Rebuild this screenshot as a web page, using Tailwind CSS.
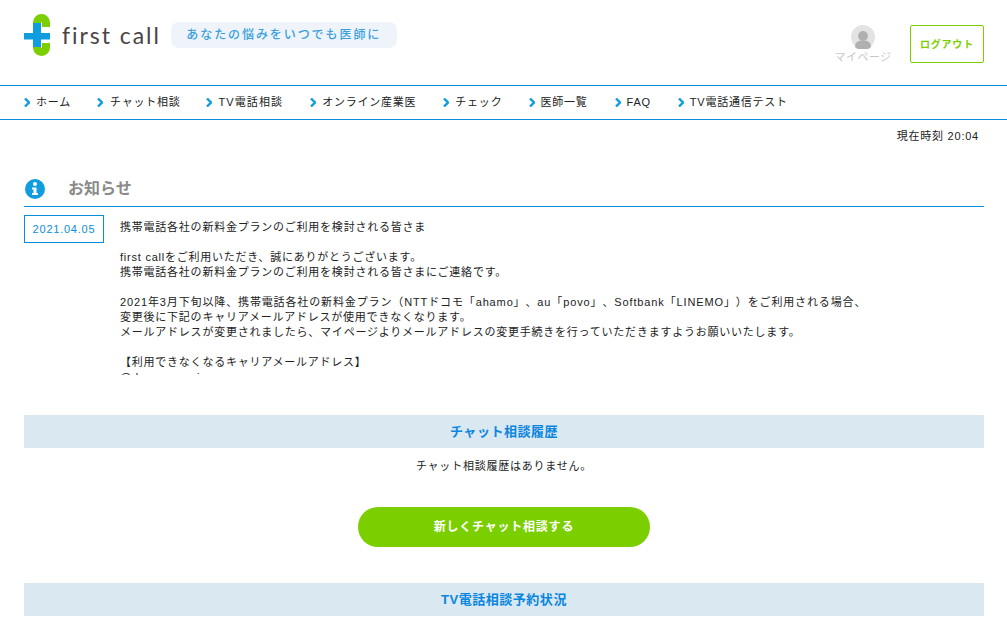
<!DOCTYPE html>
<html lang="ja">
<head>
    <meta charset="UTF-8">
    <title>first call</title>
    <script src="https://cdn.jsdelivr.net/npm/@tailwindcss/browser@4"></script>
</head>
<body class="h-[624px] overflow-hidden bg-white text-[11px] leading-[15px] tracking-[0.07em] text-[#222] [text-spacing-trim:space-all] font-['Liberation_Sans','Noto_Sans_CJK_JP',sans-serif]">
    <!-- Header -->
    <header class="h-[86px] border-b border-[#0a8ed9] pl-[24px] pr-[23px] flex">
        <svg class="mt-[14px] w-[26px] h-[42px]" viewBox="0 0 26 42">
            <path d="M22 13V8.500A4.500 4.500 0 0 0 13 8.500V33.500A4.500 4.500 0 0 0 22 33.500V29" fill="none" stroke="#7bcf00" stroke-width="8"/>
            <path d="M9 9h8v24H9zM0 19h26v6.500H0z" fill="#0f9de0"/>
        </svg>
        <span class="ml-[12px] mt-[20px] text-[23px] leading-[30px] tracking-[0.085em] font-normal text-[#4a4444] font-['Lato',sans-serif]">first call</span>
        <div class="ml-[10px] mt-[22px] w-[226px] h-[26px] rounded-[8px] bg-[#eef4fa] flex items-center justify-center text-[12px] font-medium tracking-[0.16em] text-[#3a9fdc]">あなたの悩みをいつでも医師に</div>
        <div class="ml-auto mt-[25px] w-[54px] flex flex-col items-center text-[#c8c8c8] tracking-[0.04em]">
            <svg class="w-[24px] h-[24px]" viewBox="0 0 24 24">
                <circle cx="12" cy="12" r="12" fill="#e3e3e3"/>
                <circle cx="12" cy="11" r="5" fill="#b0b0b0"/>
                <path d="M4 22c0-5 3-6.500 8-6.500s8 1.500 8 6.500a12 12 0 0 1-16 0z" fill="#b0b0b0"/>
            </svg>
            <span class="whitespace-nowrap mt-[1px]">マイページ</span>
        </div>
        <div class="ml-[20px] mt-[25px] w-[74px] h-[38px] border border-[#7bcf00] rounded-[2px] flex items-center justify-center text-[10px] font-bold text-[#7bcf00]">ログアウト</div>
    </header>

    <!-- Nav -->
    <nav class="h-[34px] border-b border-[#0a8ed9] px-[24px] flex items-center gap-[25px] whitespace-nowrap">
        <a class="flex items-center gap-[6px] mr-[1px]"><svg class="w-[6px] h-[9px]" viewBox="0 0 6 9"><path d="M1 .5l4 4-4 4" fill="none" stroke="#0f9de0" stroke-width="2.400"/></svg>ホーム</a>
        <a class="flex items-center gap-[7px]"><svg class="w-[6px] h-[9px]" viewBox="0 0 6 9"><path d="M1 .5l4 4-4 4" fill="none" stroke="#0f9de0" stroke-width="2.400"/></svg>チャット相談</a>
        <a class="flex items-center gap-[7px] tracking-[0.1em] mr-[2px]"><svg class="w-[6px] h-[9px]" viewBox="0 0 6 9"><path d="M1 .5l4 4-4 4" fill="none" stroke="#0f9de0" stroke-width="2.400"/></svg>TV電話相談</a>
        <a class="flex items-center gap-[6px] mr-[2px]"><svg class="w-[6px] h-[9px]" viewBox="0 0 6 9"><path d="M1 .5l4 4-4 4" fill="none" stroke="#0f9de0" stroke-width="2.400"/></svg>オンライン産業医</a>
        <a class="flex items-center gap-[6px] mr-[2px]"><svg class="w-[6px] h-[9px]" viewBox="0 0 6 9"><path d="M1 .5l4 4-4 4" fill="none" stroke="#0f9de0" stroke-width="2.400"/></svg>チェック</a>
        <a class="flex items-center gap-[5px] mr-[2px]"><svg class="w-[6px] h-[9px]" viewBox="0 0 6 9"><path d="M1 .5l4 4-4 4" fill="none" stroke="#0f9de0" stroke-width="2.400"/></svg>医師一覧</a>
        <a class="flex items-center gap-[6px] mr-[2px]"><svg class="w-[6px] h-[9px]" viewBox="0 0 6 9"><path d="M1 .5l4 4-4 4" fill="none" stroke="#0f9de0" stroke-width="2.400"/></svg>FAQ</a>
        <a class="flex items-center gap-[6px]"><svg class="w-[6px] h-[9px]" viewBox="0 0 6 9"><path d="M1 .5l4 4-4 4" fill="none" stroke="#0f9de0" stroke-width="2.400"/></svg>TV電話通信テスト</a>
    </nav>

    <main class="px-[24px] w-[1008px]">
        <p class="mt-[9px] pr-[5px] text-right">現在時刻 20:04</p>

        <!-- Notice -->
        <div class="mt-[35px] h-[28px] border-b border-[#0a8ed9] flex items-start">
            <svg class="ml-[1px] w-[20px] h-[20px]" viewBox="0 0 20 20">
                <circle cx="10" cy="10" r="10" fill="#0f9de0"/>
                <circle cx="10" cy="5" r="2" fill="#fff"/>
                <path d="M7 8.500h4.500V14H13v2H7v-2h1.500v-3.500H7z" fill="#fff"/>
            </svg>
            <h2 class="ml-[23px] text-[16px] leading-[20px] tracking-normal font-bold text-[#8a8a8a]">お知らせ</h2>
        </div>
        <div class="mt-[8px] flex items-start">
            <div class="w-[80px] h-[28px] border border-[#0a8ed9] flex items-center justify-center text-[#0a8ed9]">2021.04.05</div>
            <div class="ml-[16px] h-[160px] overflow-hidden whitespace-nowrap pt-[5px]">
                携帯電話各社の新料金プランのご利用を検討される皆さま<br><br>
                first callをご利用いただき、誠にありがとうございます。<br>
                携帯電話各社の新料金プランのご利用を検討される皆さまにご連絡です。<br><br>
                <span class="tracking-[0.079em]">2021年3月下旬以降、携帯電話各社の新料金プラン（NTTドコモ「ahamo」、au「povo」、Softbank「LINEMO」）をご利用される場合、</span><br>
                変更後に下記のキャリアメールアドレスが使用できなくなります。<br>
                メールアドレスが変更されましたら、マイページよりメールアドレスの変更手続きを行っていただきますようお願いいたします。<br><br>
                【利用できなくなるキャリアメールアドレス】<br>
                @docomo.ne.jp
            </div>
        </div>

        <!-- Chat history -->
        <h3 class="mt-[40px] h-[33px] pb-[1px] bg-[#d9e8f1] flex items-center justify-center text-[13px] font-bold tracking-[0.04em] text-[#0b86de]">チャット相談履歴</h3>
        <p class="mt-[11px] text-center">チャット相談履歴はありません。</p>
        <a class="mx-auto mt-[33px] w-[292px] h-[40px] rounded-full bg-[#7bcf00] flex items-center justify-center text-[12px] font-bold text-white">新しくチャット相談する</a>

        <!-- TV reservations -->
        <h3 class="mt-[36px] h-[33px] pb-[1px] bg-[#d9e8f1] flex items-center justify-center text-[13px] font-bold tracking-[0.04em] text-[#0b86de]">TV電話相談予約状況</h3>
    </main>
</body>
</html>
